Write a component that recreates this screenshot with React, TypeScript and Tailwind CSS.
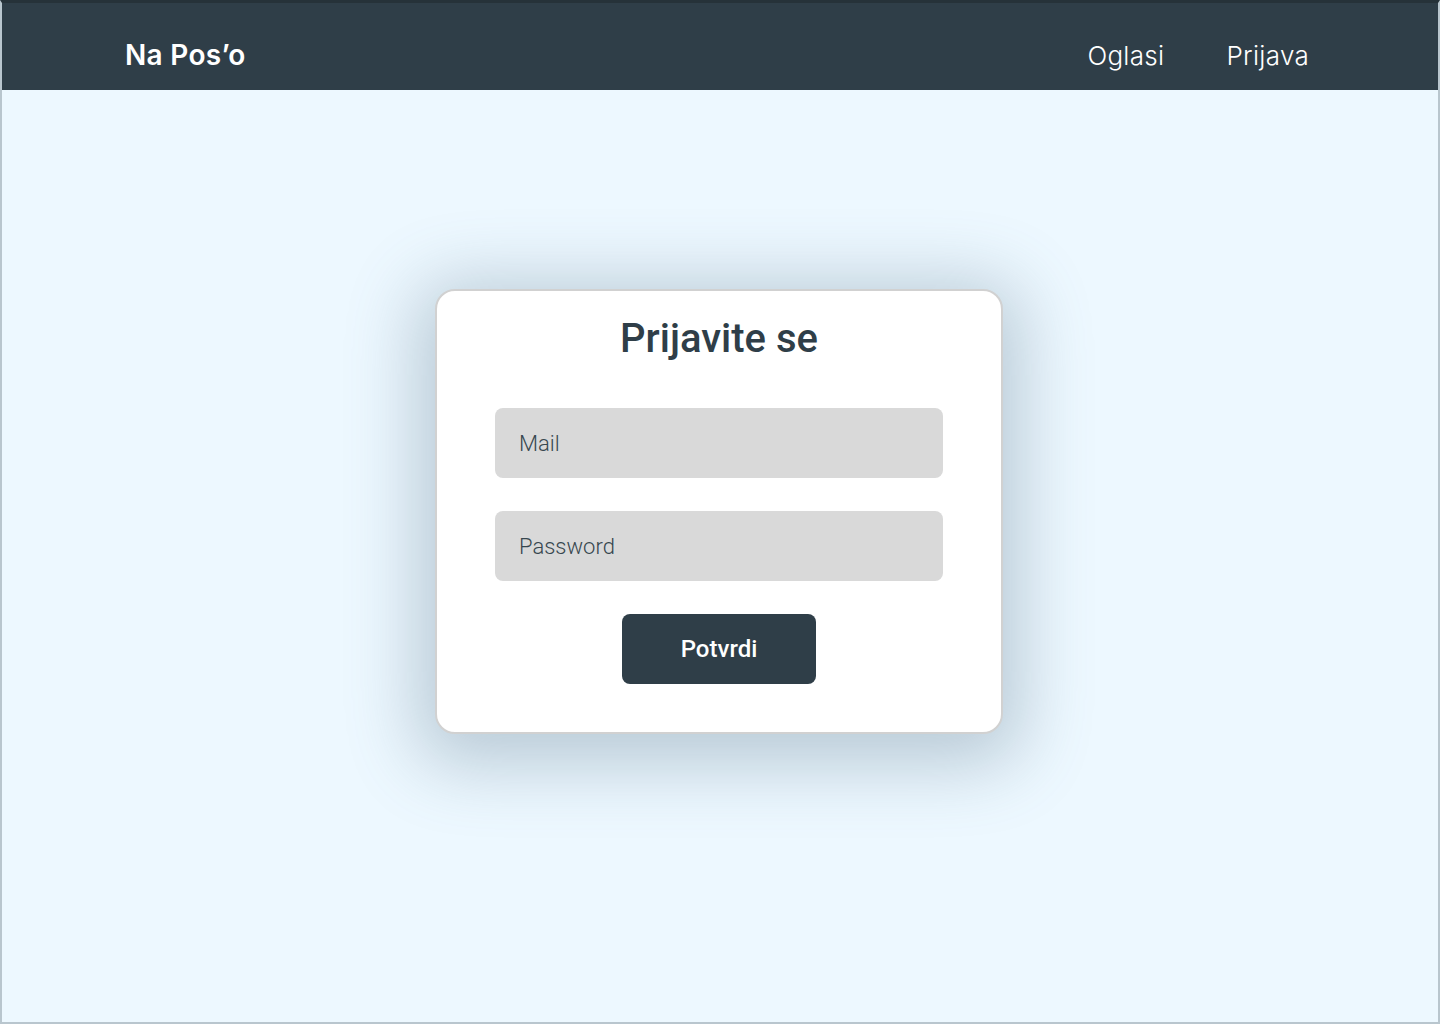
import React from "react";

export default function App() {
  return (
    <div className="w-[1440px] h-[1024px] flex flex-col bg-[#edf8ff] border-x-2 border-b-2 border-[#b9c6ce] border-t-[3px] border-t-[#263239] overflow-hidden">
      <header className="h-[87px] shrink-0 bg-[#2f3e48] flex items-center justify-between pt-[17px] pl-[123px] pr-[129px]" style={{ fontFamily: "Inter, 'Noto Sans', sans-serif" }}>
        <div className="text-white text-[28px] font-semibold tracking-[0.3px]">Na Pos’o</div>
        <nav className="flex items-center gap-[62px] text-white text-[26px] font-light tracking-[0.3px]">
          <a>Oglasi</a>
          <a>Prijava</a>
        </nav>
      </header>
      <main className="flex-1 flex justify-center pt-[199px] pr-[2px]" style={{ fontFamily: "Roboto, 'Liberation Sans', sans-serif" }}>
        <div className="w-[568px] h-[445px] bg-white border-2 border-[#d1d1d1] rounded-[20px] shadow-[0_12px_70px_18px_rgba(80,110,130,0.33)] flex flex-col items-center pt-[24px] px-[58px]">
          <h1 className="text-[40px] leading-[48px] font-medium text-[#2f3e48]">Prijavite se</h1>
          <div className="mt-[45px] w-full h-[70px] rounded-[8px] bg-[#d9d9d9] flex items-center pl-[24px] text-[22px] font-light text-[#37474f]">Mail</div>
          <div className="mt-[33px] w-full h-[70px] rounded-[8px] bg-[#d9d9d9] flex items-center pl-[24px] text-[22px] font-light text-[#37474f]">Password</div>
          <button className="mt-[33px] w-[194px] h-[70px] rounded-[8px] bg-[#2f3e48] text-white text-[24px] font-medium">Potvrdi</button>
        </div>
      </main>
    </div>
  );
}
